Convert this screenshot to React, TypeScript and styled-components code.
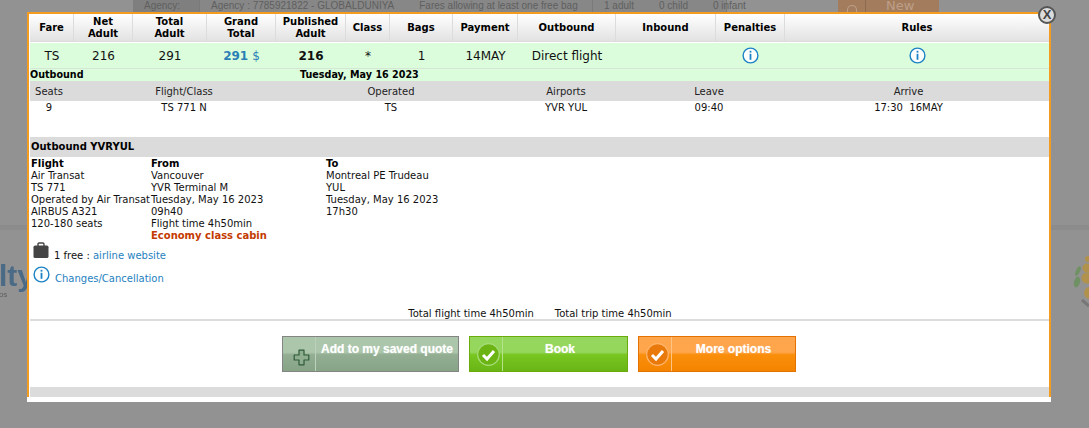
import styled, { createGlobalStyle } from 'styled-components';

const GlobalStyle = createGlobalStyle`
  html, body {
    margin: 0;
    padding: 0;
    background: #929292;
  }
`;

const FARE_COLUMNS = '44px 59px 74px 69px 70px 44px 63px 65px 98px 100px 69px 1fr';
const LEG_COLUMNS = '38px 232px 182px 168px 118px 1fr';

const Page = styled.div`
  position: relative;
  width: 1089px;
  height: 428px;
  overflow: hidden;
  background: #929292;
  font-family: "DejaVu Sans", Verdana, sans-serif;
`;

/* what is left visible of the page behind the popup */
const TopStrip = styled.div`
  display: flex;
  height: 12px;
  padding-left: 133px;
  font-family: "Liberation Sans", Arial, sans-serif;
  font-size: 10px;
  line-height: 11px;
  color: #5f5f5f;
`;

const StripCell = styled.div<{ $width: number; $dark?: boolean }>`
  display: flex;
  gap: ${(p) => (p.$dark ? 0 : 25)}px;
  width: ${(p) => p.$width}px;
  height: 12px;
  padding-left: 11px;
  box-sizing: border-box;
  white-space: nowrap;
  background: ${(p) => (p.$dark ? '#7f7f7f' : '#878787')};
  border-right: 1px solid #7a7a7a;
`;

const NewTag = styled.div`
  display: flex;
  align-items: center;
  width: 101px;
  height: 12px;
  margin-left: 111px;
  background: #a37c5e;
  color: #bc9f88;
  font-size: 13px;
  line-height: 12px;
  font-family: "DejaVu Sans", sans-serif;
`;

const NewDot = styled.span`
  display: flex;
  align-items: flex-end;
  justify-content: center;
  width: 28px;
  height: 12px;
  flex: none;
  box-sizing: border-box;
  border-right: 1px solid #8e6b50;
`;

const DotRing = styled.span`
  width: 8px;
  height: 6px;
  border: 1px solid #bc9f88;
  border-bottom: 0;
  border-radius: 5px 5px 0 0;
`;

const NewLabel = styled.span`
  padding-left: 20px;
`;

const Band = styled.div`
  height: 5px;
  margin-top: 213px;
  background: #8c8c8c;
`;

const BackLogos = styled.div`
  display: flex;
  justify-content: space-between;
  align-items: flex-start;
  margin-top: 30px;
`;

const BackBrand = styled.div`
  margin-left: -1px;
  color: #4a6a86;
  font-family: "Liberation Sans", Arial, sans-serif;
  font-weight: bold;
  font-size: 30px;
  line-height: 32px;
  filter: blur(0.5px);
`;

const BackBrandSmall = styled.div`
  font-size: 6px;
  line-height: 6px;
  color: #555;
  font-weight: normal;
`;

const BackFlower = styled.svg`
  margin-top: -5px;
  filter: blur(0.3px);
`;

/* popup */
const Popup = styled.div`
  position: absolute;
  left: 27px;
  top: 12px;
  width: 1024px;
  padding-bottom: 5px;
  background: #fff;
`;

const Frame = styled.div`
  display: flex;
  flex-direction: column;
  height: 385px;
  box-sizing: border-box;
  padding-left: 1px;
  border: 2px solid #f39c1f;
  border-bottom: 0;
`;

const CloseButton = styled.div`
  position: absolute;
  left: 1038px;
  top: 6px;
  width: 14px;
  height: 14px;
  border: 2px solid #555;
  border-radius: 50%;
  background: #dcdcdc;
  color: #444;
  font-family: "Liberation Sans", Arial, sans-serif;
  font-size: 13px;
  font-weight: bold;
  line-height: 14px;
  text-align: center;
`;

const FareHeader = styled.div`
  display: grid;
  grid-template-columns: ${FARE_COLUMNS};
  height: 27px;
  border-bottom: 1px solid #dcdcdc;
  background: linear-gradient(#ffffff, #e2e2e2);
`;

const HeadCell = styled.div`
  display: flex;
  align-items: center;
  justify-content: center;
  padding-top: 1px;
  border-right: 1px solid #dcdcdc;
  font-size: 10px;
  font-weight: bold;
  line-height: 12px;
  text-align: center;
  color: #000;
  &:last-child {
    border-right: 0;
  }
`;

const FareRow = styled.div`
  display: grid;
  grid-template-columns: ${FARE_COLUMNS};
  height: 25px;
  margin-top: 1px;
  background: #dcfddc;
  border-bottom: 1px solid #d6e6d6;
`;

const FareCell = styled.div<{ $bold?: boolean }>`
  display: flex;
  align-items: center;
  justify-content: center;
  gap: 4px;
  font-size: 12px;
  font-weight: ${(p) => (p.$bold ? 'bold' : 'normal')};
  color: #111;
`;

const Price = styled.span`
  color: #2a7fb5;
  font-weight: bold;
`;

const Currency = styled.span`
  color: #2a7fb5;
`;

const DateRow = styled.div`
  display: grid;
  grid-template-columns: 270px 1fr;
  height: 12px;
  background: #dcfddc;
  font-size: 9.6px;
  font-weight: bold;
  line-height: 12px;
  color: #000;
`;

const LegHead = styled.div`
  display: grid;
  grid-template-columns: ${LEG_COLUMNS};
  align-items: center;
  height: 20px;
  background: #dbdbdb;
  font-size: 10px;
  color: #222;
  text-align: center;
`;

const LegRow = styled(LegHead)`
  height: 12px;
  background: #fff;
  color: #111;
`;

const SectionTitle = styled.div`
  height: 20px;
  margin-top: 24px;
  background: #dbdbdb;
  font-size: 10px;
  font-weight: bold;
  line-height: 20px;
  color: #000;
  padding-left: 1px;
`;

const Details = styled.div`
  display: grid;
  grid-template-columns: 120px 175px 1fr;
  margin-top: 1px;
  padding-left: 1px;
  font-size: 10px;
  line-height: 12px;
  color: #111;
`;

const DetailColumn = styled.div`
  white-space: nowrap;
`;

const DetailHead = styled.div`
  font-weight: bold;
  color: #000;
`;

const Cabin = styled.div`
  font-weight: bold;
  color: #c43a00;
`;

const NoteRow = styled.div<{ $gap: number }>`
  display: flex;
  align-items: flex-start;
  gap: 5px;
  margin-top: ${(p) => p.$gap}px;
  padding-left: 3px;
  font-size: 10px;
  line-height: 12px;
  color: #111;
`;

const NoteText = styled.span<{ $drop: number }>`
  margin-top: ${(p) => p.$drop}px;
`;

const Link = styled.a`
  color: #1f7fc0;
`;

const Totals = styled.div`
  display: flex;
  justify-content: center;
  gap: 21px;
  margin-top: auto;
  height: 12px;
  padding-left: 1px;
  font-size: 10px;
  line-height: 13px;
  color: #111;
`;

const Divider = styled.div`
  height: 2px;
  background: #dcdcdc;
`;

const Actions = styled.div`
  display: flex;
  justify-content: center;
  gap: 10px;
  padding: 15px 1px 15px 0;
`;

const actionTones = {
  grey: { top: '#abc6ab', mid: '#93ae93', low: '#87a487', line: '#848484', rule: '#bcd0bc' },
  green: { top: '#95d65c', mid: '#78c621', low: '#69b516', line: '#6cab0c', rule: '#b5e38a' },
  orange: { top: '#ffa54b', mid: '#fa8f0c', low: '#f48400', line: '#e47200', rule: '#ffc384' },
};

const ActionButton = styled.div<{ $tone: keyof typeof actionTones; $width: number }>`
  display: flex;
  width: ${(p) => p.$width}px;
  height: 36px;
  box-sizing: border-box;
  border: 1px solid ${(p) => actionTones[p.$tone].line};
  background: linear-gradient(
    ${(p) => actionTones[p.$tone].top} 45%,
    ${(p) => actionTones[p.$tone].mid} 52%,
    ${(p) => actionTones[p.$tone].low}
  );
  font-family: "Liberation Sans", Arial, sans-serif;
  font-size: 12px;
  font-weight: bold;
  line-height: 24px;
  color: #fff;
  text-shadow: 0 0 1px rgba(255, 255, 255, 0.6);
`;

const ActionIcon = styled.div<{ $tone: keyof typeof actionTones }>`
  display: flex;
  align-items: flex-end;
  justify-content: center;
  flex: none;
  width: 33px;
  padding: 0 0 5px 5px;
  box-sizing: border-box;
  border-right: 1px solid ${(p) => actionTones[p.$tone].rule};
`;

const ActionLabel = styled.div<{ $inset?: number }>`
  flex: 1;
  padding-right: ${(p) => p.$inset ?? 0}px;
  text-align: center;
  white-space: nowrap;
`;

const BottomBar = styled.div`
  height: 10px;
  background: #dcdcdc;
`;

const InfoIcon = ({ size = 17 }: { size?: number }) => (
  <svg width={size} height={size} viewBox="0 0 17 17">
    <circle cx="8.5" cy="8.5" r="7.4" fill="#fff" stroke="#1b82c5" strokeWidth="1.4" />
    <rect x="7.6" y="3.8" width="1.8" height="1.8" fill="#1b82c5" />
    <rect x="7.6" y="6.8" width="1.8" height="6" fill="#1b82c5" />
  </svg>
);

const BagIcon = () => (
  <svg width="16" height="17" viewBox="0 0 16 17">
    <path d="M5 4V2.2C5 1.5 5.5 1 6.2 1h3.6c.7 0 1.2.5 1.2 1.2V4" fill="none" stroke="#444" strokeWidth="1.4" />
    <rect x="0.5" y="3.6" width="15" height="12.4" rx="1.6" fill="#444" />
  </svg>
);

const PlusIcon = () => (
  <svg width="17" height="17" viewBox="0 0 17 17">
    <path
      d="M6 1.2h5v4.8h4.8v5H11v4.8H6V11H1.2V6H6z"
      fill="#8fae8f"
      stroke="#2f5a3a"
      strokeWidth="1.2"
      strokeLinejoin="round"
    />
  </svg>
);

const CheckIcon = ({ light, dark }: { light: string; dark: string }) => (
  <svg width="23" height="23" viewBox="0 0 23 23">
    <circle cx="11.5" cy="11.5" r="10.8" fill={dark} stroke={light} strokeWidth="1.2" />
    <path d="M6 12l4 4 7-8" fill="none" stroke="#fff" strokeWidth="3" />
  </svg>
);

const fareHeads = [
  ['Fare'],
  ['Net', 'Adult'],
  ['Total', 'Adult'],
  ['Grand', 'Total'],
  ['Published', 'Adult'],
  ['Class'],
  ['Bags'],
  ['Payment'],
  ['Outbound'],
  ['Inbound'],
  ['Penalties'],
  ['Rules'],
];

const App = () => {
  return (
    <Page>
      <GlobalStyle />

      <TopStrip>
        <StripCell $width={67} $dark>Agency:</StripCell>
        <StripCell $width={393}>
          <span>Agency : 7785921822 - GLOBALDUNIYA</span>
          <span>Fares allowing at least one free bag</span>
        </StripCell>
        <StripCell $width={134}>
          <span>1 adult</span>
          <span>0 child</span>
          <span>0 infant</span>
        </StripCell>
        <NewTag>
          <NewDot>
            <DotRing />
          </NewDot>
          <NewLabel>New</NewLabel>
        </NewTag>
      </TopStrip>
      <Band />
      <BackLogos>
        <BackBrand>
          lty
          <BackBrandSmall>DS</BackBrandSmall>
        </BackBrand>
        <BackFlower width="16" height="60" viewBox="0 0 16 60">
          <ellipse cx="5" cy="16" rx="2" ry="5" fill="#6f9163" transform="rotate(25 5 16)" />
          <ellipse cx="4" cy="27" rx="3" ry="5.5" fill="#6f9163" transform="rotate(15 4 27)" />
          <circle cx="15" cy="4" r="3" fill="#b0924c" />
          <circle cx="14" cy="13" r="4.5" fill="#b0924c" />
          <circle cx="14" cy="23" r="5.5" fill="#b0924c" />
          <circle cx="17" cy="38" r="6" fill="#b0924c" />
          <path d="M9 45l7 6" stroke="#777" strokeWidth="3" />
        </BackFlower>
      </BackLogos>

      <Popup>
        <Frame>
          <FareHeader>
            {fareHeads.map((lines) => (
              <HeadCell key={lines.join()}>
                <div>
                  {lines.map((line) => (
                    <div key={line}>{line}</div>
                  ))}
                </div>
              </HeadCell>
            ))}
          </FareHeader>

          <FareRow>
            <FareCell>TS</FareCell>
            <FareCell>216</FareCell>
            <FareCell>291</FareCell>
            <FareCell>
              <Price>291</Price>
              <Currency>$</Currency>
            </FareCell>
            <FareCell $bold>216</FareCell>
            <FareCell>*</FareCell>
            <FareCell>1</FareCell>
            <FareCell>14MAY</FareCell>
            <FareCell>Direct flight</FareCell>
            <FareCell />
            <FareCell>
              <InfoIcon />
            </FareCell>
            <FareCell>
              <InfoIcon />
            </FareCell>
          </FareRow>

          <DateRow>
            <div>Outbound</div>
            <div>Tuesday, May 16 2023</div>
          </DateRow>

          <LegHead>
            <div>Seats</div>
            <div>Flight/Class</div>
            <div>Operated</div>
            <div>Airports</div>
            <div>Leave</div>
            <div>Arrive</div>
          </LegHead>
          <LegRow>
            <div>9</div>
            <div>TS 771 N</div>
            <div>TS</div>
            <div>YVR YUL</div>
            <div>09:40</div>
            <div>17:30&nbsp;&nbsp;16MAY</div>
          </LegRow>

          <SectionTitle>Outbound YVRYUL</SectionTitle>
          <Details>
            <DetailColumn>
              <DetailHead>Flight</DetailHead>
              <div>Air Transat</div>
              <div>TS 771</div>
              <div>Operated by Air Transat</div>
              <div>AIRBUS A321</div>
              <div>120-180 seats</div>
            </DetailColumn>
            <DetailColumn>
              <DetailHead>From</DetailHead>
              <div>Vancouver</div>
              <div>YVR Terminal M</div>
              <div>Tuesday, May 16 2023</div>
              <div>09h40</div>
              <div>Flight time 4h50min</div>
              <Cabin>Economy class cabin</Cabin>
            </DetailColumn>
            <DetailColumn>
              <DetailHead>To</DetailHead>
              <div>Montreal PE Trudeau</div>
              <div>YUL</div>
              <div>Tuesday, May 16 2023</div>
              <div>17h30</div>
            </DetailColumn>
          </Details>

          <NoteRow $gap={0}>
            <BagIcon />
            <NoteText $drop={8}>
              1 free : <Link>airline website</Link>
            </NoteText>
          </NoteRow>
          <NoteRow $gap={4}>
            <InfoIcon />
            <NoteText $drop={7}>
              <Link>Changes/Cancellation</Link>
            </NoteText>
          </NoteRow>

          <Totals>
            <span>Total flight time 4h50min</span>
            <span>Total trip time 4h50min</span>
          </Totals>
          <Divider />

          <Actions>
            <ActionButton $tone="grey" $width={177}>
              <ActionIcon $tone="grey">
                <PlusIcon />
              </ActionIcon>
              <ActionLabel>Add to my saved quote</ActionLabel>
            </ActionButton>
            <ActionButton $tone="green" $width={159}>
              <ActionIcon $tone="green">
                <CheckIcon light="#a6dc78" dark="#6cb413" />
              </ActionIcon>
              <ActionLabel $inset={10}>Book</ActionLabel>
            </ActionButton>
            <ActionButton $tone="orange" $width={158}>
              <ActionIcon $tone="orange">
                <CheckIcon light="#ffb56c" dark="#e8790a" />
              </ActionIcon>
              <ActionLabel>More options</ActionLabel>
            </ActionButton>
          </Actions>

          <BottomBar />
        </Frame>
      </Popup>
      <CloseButton>X</CloseButton>
    </Page>
  );
};

export default App;
